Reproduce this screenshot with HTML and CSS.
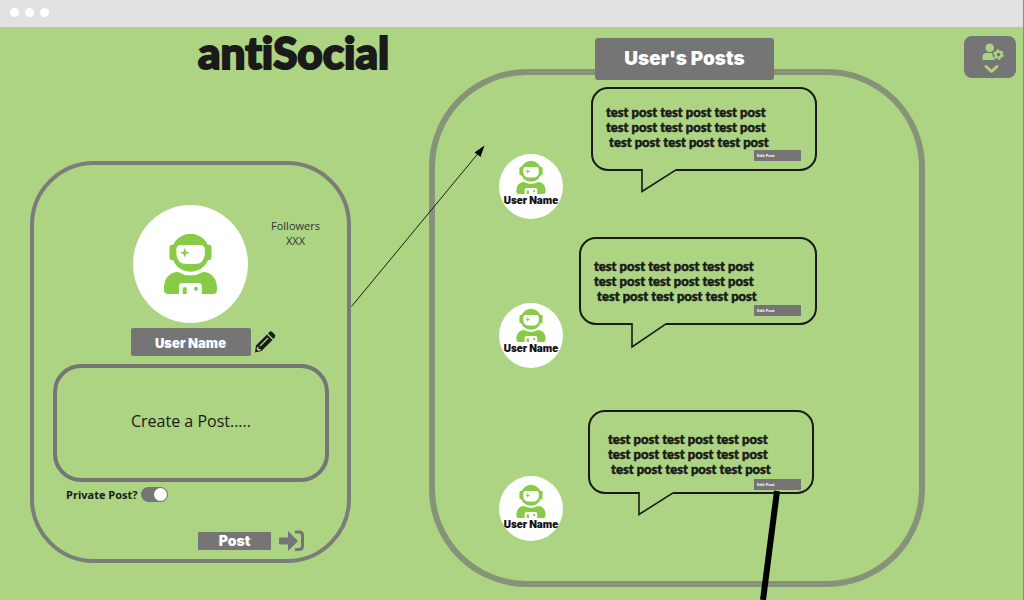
FILE: index.html
```html
<!DOCTYPE html>
<html lang="en">
<head>
<meta charset="utf-8">
<title>antiSocial</title>
<link rel="stylesheet" href="styles.css">
</head>
<body>
<svg class="defs" aria-hidden="true">
  <symbol id="astronaut" viewBox="0 0 53 60">
    <rect x="5.5" y="11" width="42" height="15" rx="2" fill="#88cb46"/>
    <circle cx="26.5" cy="18.8" r="19" fill="#88cb46"/>
    <path d="M16.500 11H36.500Q40.800 11 40.800 15.500V19Q40.800 30 30.500 30H23Q12.400 30 12.400 19V15.500Q12.400 11 16.500 11Z" fill="#fff"/>
    <path d="M20.700 14L22 17.500L25.500 18.800L22 20.100L20.700 23.600L19.400 20.100L16 18.800L19.400 17.500Z" fill="#88cb46"/>
    <path d="M0 54C0 45 5 38 14 38Q26.500 45 39 38C48 38 53 45 53 54V56Q53 60 49 60H37.800V52Q37.800 49 34.800 49H18Q15 49 15 52V60H4Q0 60 0 56Z" fill="#88cb46"/>
    <path d="M18.700 60V55Q18.700 53 20.700 53T22.700 55V60Z" fill="#88cb46"/>
    <circle cx="32" cy="54.700" r="2" fill="#88cb46"/>
  </symbol>
</svg>
<header class="chrome"><span class="dot"></span><span class="dot"></span><span class="dot"></span></header>
<main class="app">
  <section class="side">
    <h1 class="brand">antiSocial</h1>
    <div class="card">
      <div class="identity">
        <div class="portrait"><svg class="portrait-icon" role="img" aria-label="Profile picture"><use href="#astronaut"/></svg></div>
        <p class="followers">Followers<br>XXX</p>
      </div>
      <div class="name-row">
        <h2 class="name">User Name</h2>
        <button class="icon-button" type="button" aria-label="Edit name">
          <svg width="22" height="22" viewBox="0 0 22 22"><path d="M0 21.500L1 14.500L12 3.500L17.500 9L6.500 20Z" fill="#1a1a1a"/><path d="M13 2.500L15 .6Q16 0 17 .7L20 3.800Q20.800 5 20 6L18.500 8Z" fill="#1a1a1a"/><path d="M5 15L13 7" stroke="#acd482" stroke-width="1.300"/><path d="M2.200 15.800L3.500 16V18H5.500L5.800 19.300L3.300 20L1.600 18.300Z" fill="#acd482"/></svg>
        </button>
      </div>
      <textarea class="composer" aria-label="Create a post" placeholder="Create a Post....."></textarea>
      <div class="privacy"><label for="private">Private Post?</label><input class="toggle" id="private" type="checkbox" checked></div>
      <div class="submit-row">
        <button class="post-button" type="button">Post</button>
        <button class="icon-button" type="button" aria-label="Send post">
          <svg width="26" height="22" viewBox="0 0 26 22"><path d="M1 7.500H9V1L19 11L9 21V14.500H1Q0 14.500 0 13.500V8.500Q0 7.500 1 7.500Z" fill="#757575"/><path d="M16 2H20Q23.500 2 23.500 5.500V16Q23.500 19.500 20 19.500H16" fill="none" stroke="#757575" stroke-width="3"/></svg>
        </button>
      </div>
    </div>
  </section>
  <section class="feed">
    <h2 class="feed-title">User's Posts</h2>
    <div class="feed-panel">
      <article class="post post-first">
        <div class="author"><svg class="author-icon" aria-hidden="true"><use href="#astronaut"/></svg><span>User Name</span></div>
        <div class="bubble">
          <p>test post test post test post<br>test post test post test post<br>&nbsp;test post test post test post</p>
          <button class="edit" type="button">Edit Post</button>
          <svg class="tail" width="36" height="25" viewBox="0 0 36 25"><path d="M1 0V22.500L35 1V0Z" fill="#acd482"/><path d="M1 0V22.500L35 .8" fill="none" stroke="#1a1a1a" stroke-width="1.600"/></svg>
        </div>
      </article>
      <article class="post post-second">
        <div class="author"><svg class="author-icon" aria-hidden="true"><use href="#astronaut"/></svg><span>User Name</span></div>
        <div class="bubble">
          <p>test post test post test post<br>test post test post test post<br>&nbsp;test post test post test post</p>
          <button class="edit" type="button">Edit Post</button>
          <svg class="tail" width="36" height="26" viewBox="0 0 36 26"><path d="M1 0V24L35 1V0Z" fill="#acd482"/><path d="M1 0V24L35 .8" fill="none" stroke="#1a1a1a" stroke-width="1.600"/></svg>
        </div>
      </article>
      <article class="post post-third">
        <div class="author"><svg class="author-icon" aria-hidden="true"><use href="#astronaut"/></svg><span>User Name</span></div>
        <div class="bubble">
          <p>test post test post test post<br>test post test post test post<br>&nbsp;test post test post test post</p>
          <button class="edit" type="button">Edit Post</button>
          <svg class="tail" width="36" height="25" viewBox="0 0 36 25"><path d="M1 0V22.500L35 1V0Z" fill="#acd482"/><path d="M1 0V22.500L35 .8" fill="none" stroke="#1a1a1a" stroke-width="1.600"/></svg>
        </div>
      </article>
    </div>
  </section>
  <button class="menu" type="button" aria-label="Account menu">
    <svg width="52" height="42" viewBox="0 0 52 42"><circle cx="25.700" cy="11.700" r="4.300" fill="#acd482"/><path d="M18.500 24V21Q18.500 17 22.500 17H28Q28.300 20.500 31 24Z" fill="#acd482"/><circle cx="34.500" cy="18.600" r="3" fill="none" stroke="#acd482" stroke-width="2.200"/><circle cx="34.500" cy="18.600" r="4.500" fill="none" stroke="#acd482" stroke-width="1.600" stroke-dasharray="2.300 2.412"/><path d="M22 30.500L27.500 35.500L33 30.500" fill="none" stroke="#acd482" stroke-width="3" stroke-linecap="round" stroke-linejoin="round"/></svg>
  </button>
  <svg class="links" viewBox="0 0 1023 573" preserveAspectRatio="none" aria-hidden="true"><path d="M351.500 279.500L478 126.500" stroke="#1a1a1a" stroke-width="1"/><path d="M484.500 118.500L480.500 130L477.500 127.500L474.500 125.500Z"/><path d="M777 464L763 573" stroke="#000" stroke-width="6"/></svg>
</main>
</body>
</html>
```

FILE: styles.css
```css
* { box-sizing: border-box; }
body { margin: 0; background: #acd482; color: #1a1a1a; font-family: "Open Sans", sans-serif; border-right: 1px solid #8c8c8c; overflow-x: hidden; }
h1, h2, p { margin: 0; }
button { border: 0; padding: 0; color: inherit; font: inherit; cursor: pointer; }
svg { display: block; }
.defs { position: absolute; width: 0; height: 0; }
.chrome { display: flex; align-items: center; gap: 6px; height: 27px; padding: 0 10px 2px; background: #e1e1e1; }
.dot { width: 9px; height: 9px; border-radius: 50%; background: #fff; }
.app { position: relative; display: grid; grid-template-columns: minmax(0, 321fr) minmax(0, 535fr) 52px; column-gap: 39px; align-items: start; min-height: calc(100vh - 27px); padding: 0 7px 0 30px; overflow: hidden; }
.links { position: absolute; left: 0; top: 0; width: 100%; height: 100%; pointer-events: none; }

.brand { margin: 0 0 84px 168px; white-space: nowrap; font: 900 44px/50px Lato, sans-serif; font-variant-ligatures: none; -webkit-text-stroke: 2px #1a1a1a; stroke-linejoin: round; }
.card { display: flex; flex-direction: column; min-height: 402px; padding-top: 40px; border: 4px solid #7b7d78; border-radius: 64px; }
.identity { display: grid; grid-template-columns: 1fr 115px 1fr; }
.portrait { grid-column: 2; display: flex; align-items: center; justify-content: center; height: 118px; border-radius: 50%; background: #fff; }
.portrait-icon { width: 53px; height: 60px; }
.followers { padding: 13px 4px 0 0; text-align: center; font-size: 11px; line-height: 15px; color: #333; }
.name-row { display: grid; grid-template-columns: 1fr 120px 1fr; column-gap: 4px; align-items: center; margin-top: 5px; }
.name { grid-column: 2; height: 28px; padding-top: 1px; border-radius: 2px; background: #757575; color: #fff; text-align: center; font: 900 13px/28px Inter, sans-serif; }
.icon-button { justify-self: start; background: none; }
.composer { display: block; height: 118px; margin: 8px 18px 0 19px; padding: 41px 10px 0; border: 4px solid #757575; border-radius: 28px; background: transparent; resize: none; text-align: center; font: 16px/24px "Open Sans", sans-serif; color: #1a1a1a; overflow: hidden; }
.composer::placeholder { color: #1a1a1a; opacity: 1; }
.privacy { display: flex; align-items: center; gap: 3px; margin-top: 5px; padding-left: 32px; font-size: 11px; line-height: 15px; font-weight: 700; }
.toggle { appearance: none; display: flex; justify-content: flex-end; align-items: center; width: 27px; height: 15px; margin: 0; padding: 0 1px; border-radius: 8px; background: #757575; }
.toggle::before { content: ""; width: 13px; height: 13px; border-radius: 50%; background: #fff; }
.toggle:not(:checked) { justify-content: flex-start; }
.submit-row { display: flex; align-items: center; justify-content: flex-end; gap: 8px; margin-top: 28px; padding-right: 42px; }
.post-button { width: 73px; height: 18px; border-radius: 1px; background: #757575; color: #fff; font: 900 14px/18px Inter, sans-serif; }

.feed { margin-left: 39px; padding-top: 11px; }
.feed-title { position: relative; z-index: 1; width: 179px; height: 42px; margin: 0 auto -11px 166px; border-radius: 3px; background: #757575; color: #fff; text-align: center; font: 900 19px/42px Inter, sans-serif; }
.feed-panel { min-height: 518px; padding: 12px 0 0 64px; border: 6px solid #869379; border-radius: 98px; }
.post { display: flex; align-items: flex-start; gap: 28px; padding-right: 102px; }
.post-first { min-height: 150px; }
.post-second { gap: 16px; min-height: 173px; }
.post-third { gap: 25px; padding-right: 105px; }
.author { flex: none; display: flex; flex-direction: column; align-items: center; width: 64px; height: 65px; margin-top: 67px; padding-top: 7px; border-radius: 50%; background: #fff; white-space: nowrap; font: 900 10px/12px Inter, sans-serif; color: #111; }
.post-second .author { padding-top: 6px; }
.post-second .author, .post-third .author { margin-top: 66px; }
.post-third .author { padding-top: 9px; }
.author-icon { width: 30px; height: 33px; }
.bubble { position: relative; flex: 1; min-height: 84px; padding: 20px 0 0 13px; border: 2px solid #1a1a1a; border-radius: 17px; font: 900 13px/15px Lato, sans-serif; -webkit-text-stroke: 0.5px; white-space: nowrap; }
.post-first .bubble { padding-top: 16px; }
.post-second .bubble { min-height: 88px; }
.post-third .bubble { padding-left: 18px; }
.edit { position: absolute; right: 14px; bottom: 8px; width: 47px; height: 11px; padding-left: 3px; background: #757575; color: #fff; text-align: left; font: 700 4px/11px "Open Sans", sans-serif; -webkit-text-stroke: 0; }
.post-second .edit { bottom: 7px; }
.post-third .edit { right: 11px; bottom: 2px; }
.tail { position: absolute; left: 48px; top: 100%; }
.post-second .tail { left: 50px; }

.menu { display: flex; justify-content: center; margin-top: 9px; border-radius: 8px; background: #757575; }
```
